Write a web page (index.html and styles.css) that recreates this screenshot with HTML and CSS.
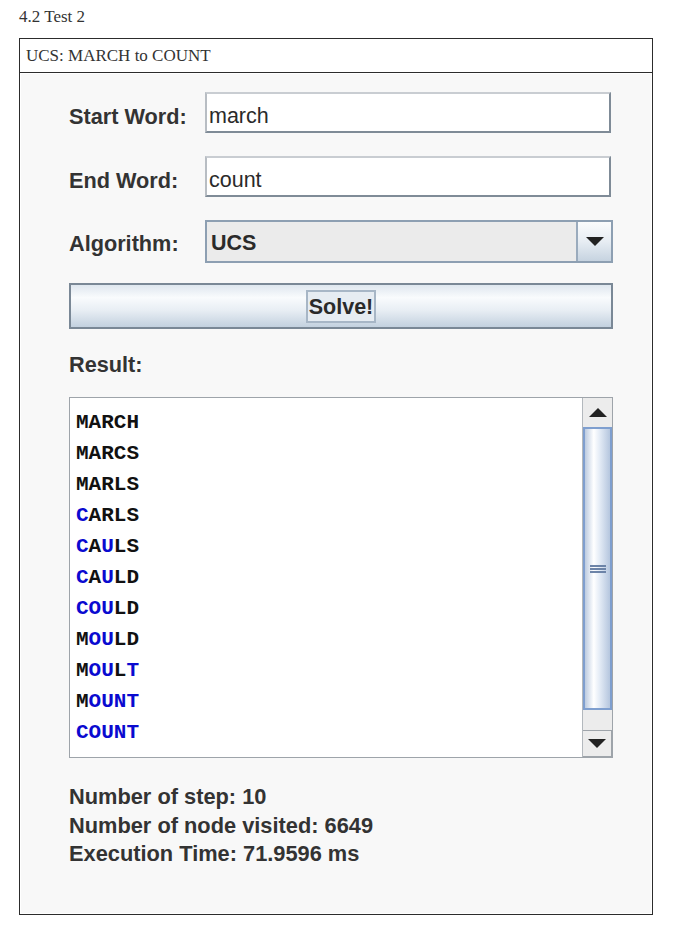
FILE: index.html
```html
<!DOCTYPE html>
<html>
<head>
<meta charset="utf-8">
<link rel="stylesheet" href="styles.css">
</head>
<body>
<div class="doc-title">4.2 Test 2</div>
<div class="figure">
  <div class="figure-head">UCS: MARCH to COUNT</div>
  <div class="panel">
    <div class="form-row">
      <span class="label">Start Word:</span>
      <div class="field">march</div>
    </div>
    <div class="form-row">
      <span class="label">End Word:</span>
      <div class="field">count</div>
    </div>
    <div class="form-row">
      <span class="label label-combo">Algorithm:</span>
      <div class="combo">
        <span class="combo-value">UCS</span>
        <span class="combo-btn"><span class="tri-down"></span></span>
      </div>
    </div>
    <div class="solve"><span class="solve-inner">Solve!</span></div>
    <div class="result-label">Result:</div>
    <div class="result-box">
      <div class="result-list">
        <div class="w">MARCH</div>
        <div class="w">MARCS</div>
        <div class="w">MARLS</div>
        <div class="w"><b class="c">C</b>ARLS</div>
        <div class="w"><b class="c">C</b>A<b class="c">U</b>LS</div>
        <div class="w"><b class="c">C</b>A<b class="c">U</b>LD</div>
        <div class="w"><b class="c">COU</b>LD</div>
        <div class="w">M<b class="c">OU</b>LD</div>
        <div class="w">M<b class="c">OU</b>L<b class="c">T</b></div>
        <div class="w">M<b class="c">OUNT</b></div>
        <div class="w"><b class="c">COUNT</b></div>
      </div>
      <div class="scrollbar">
        <div class="sb-btn"><span class="tri-up"></span></div>
        <div class="sb-track">
          <div class="sb-thumb"><span class="grip"></span></div>
        </div>
        <div class="sb-btn sb-btn-down"><span class="tri-down"></span></div>
      </div>
    </div>
    <div class="stats">
      <div>Number of step: 10</div>
      <div>Number of node visited: 6649</div>
      <div>Execution Time: 71.9596 ms</div>
    </div>
  </div>
</div>
</body>
</html>
```
FILE: styles.css
```css
html, body {
  margin: 0;
  padding: 0;
  background: #ffffff;
}
body {
  font-family: "Liberation Serif", serif;
  color: #222;
}
.doc-title {
  font-size: 17px;
  line-height: 20px;
  padding: 7px 0 0 19px;
  height: 30px;
  box-sizing: border-box;
  color: #333;
}
.figure {
  margin: 8px 0 0 19px;
  width: 634px;
  height: 877px;
  box-sizing: border-box;
  border: 1.5px solid #2c2c2c;
  display: flex;
  flex-direction: column;
}
.figure-head {
  height: 34px;
  box-sizing: border-box;
  border-bottom: 1.5px solid #2c2c2c;
  font-size: 17px;
  line-height: 34px;
  padding-left: 6px;
  color: #333;
}
.panel {
  flex: 1;
  background: #f8f8f8;
  margin: 1px;
  padding: 18px 0 0 48px;
  font-family: "Liberation Sans", Arial, sans-serif;
  color: #333;
}
.form-row {
  display: flex;
  align-items: center;
  margin-bottom: 23px;
}
.label {
  width: 136px;
  font-weight: bold;
  font-size: 21.7px;
  padding-top: 8px;
}
.label-combo {
  padding-top: 4px;
}
.field {
  width: 406px;
  height: 41px;
  box-sizing: border-box;
  background: #fff;
  border-top: 2px solid #c9cdd2;
  border-left: 2px solid #b8bdc3;
  border-right: 2px solid #7f8b97;
  border-bottom: 2px solid #7f8b97;
  font-size: 21.5px;
  line-height: 29px;
  padding: 8px 0 0 2px;
  color: #2a2a2a;
}
.combo {
  width: 408px;
  height: 43px;
  box-sizing: border-box;
  display: flex;
  border: 2px solid #8d9fb2;
  background: #ebebeb;
}
.combo-value {
  flex: 1;
  font-weight: bold;
  font-size: 21.5px;
  line-height: 35px;
  padding: 4px 0 0 4px;
  color: #2a2a2a;
  border-right: 2px solid #9aabbd;
}
.combo-btn {
  width: 33px;
  display: flex;
  align-items: center;
  justify-content: center;
  background: linear-gradient(#fbfcfd, #e7edf3 50%, #c6d3e0);
}
.tri-down {
  width: 0;
  height: 0;
  border-left: 9px solid transparent;
  border-right: 9px solid transparent;
  border-top: 9px solid #222;
}
.tri-up {
  width: 0;
  height: 0;
  border-left: 9px solid transparent;
  border-right: 9px solid transparent;
  border-bottom: 9px solid #222;
}
.solve {
  margin-top: -3px;
  width: 544px;
  height: 46px;
  box-sizing: border-box;
  border: 2px solid #7a8896;
  background: linear-gradient(#dfe7ef, #f9fbfd 30%, #e8eef4 60%, #c3d1df);
  display: flex;
  align-items: center;
  justify-content: center;
}
.solve-inner {
  border: 2px solid #a7b6c6;
  background: #e6ecf2;
  font-weight: bold;
  font-size: 21.5px;
  line-height: 27px;
  padding: 2px 1px 0;
  color: #2a2a2a;
}
.result-label {
  margin-top: 24px;
  font-weight: bold;
  font-size: 21.7px;
  line-height: 24px;
  height: 24px;
}
.result-box {
  margin-top: 20px;
  width: 544px;
  height: 361px;
  box-sizing: border-box;
  border: 1px solid #9ea4aa;
  background: #fff;
  display: flex;
}
.result-list {
  flex: 1;
  padding: 11px 0 0 6px;
  font-family: "Liberation Mono", "Courier New", monospace;
  font-weight: bold;
  font-size: 21px;
  color: #111;
}
.w {
  height: 31px;
  line-height: 28px;
}
.c {
  color: #0a0ad0;
}
.scrollbar {
  width: 29px;
  border-left: 1px solid #b3b8bd;
  display: flex;
  flex-direction: column;
  background: #ececec;
}
.sb-btn {
  height: 29px;
  box-sizing: border-box;
  background: #ececec;
  display: flex;
  align-items: center;
  justify-content: center;
}
.sb-btn-down {
  height: 27px;
  border-top: 1px solid #9ea4aa;
  border-right: 1px solid #9ea4aa;
  border-bottom: 1px solid #9ea4aa;
}
.sb-track {
  flex: 1;
  display: flex;
  flex-direction: column;
  padding-bottom: 20px;
}
.sb-thumb {
  flex: 1;
  box-sizing: border-box;
  border: 2px solid #7f9fcf;
  background: linear-gradient(90deg, #bccbe0, #ffffff 35%, #e2eaf5 60%, #b5c6de);
  display: flex;
  align-items: center;
  justify-content: center;
}
.grip {
  width: 16px;
  height: 8px;
  background: linear-gradient(#6d84a8 0 2px, transparent 2px 3px, #6d84a8 3px 5px, transparent 5px 6px, #6d84a8 6px 8px);
}
.stats {
  margin-top: 25px;
  font-weight: bold;
  font-size: 21.8px;
  line-height: 28.5px;
}
```
